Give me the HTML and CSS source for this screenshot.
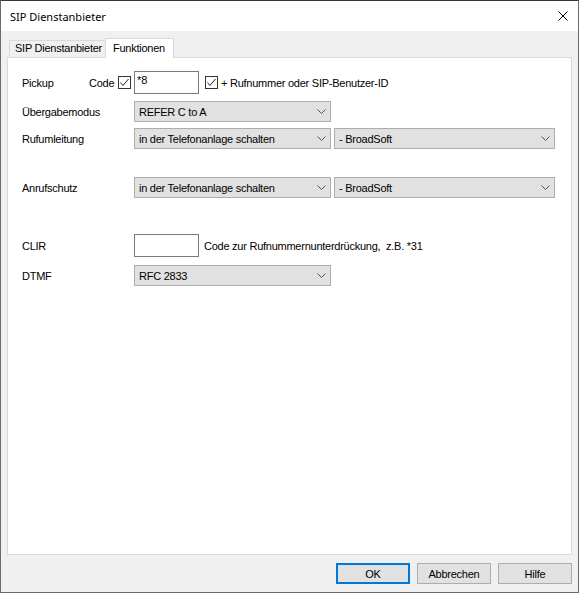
FILE: index.html
```html
<!DOCTYPE html>
<html lang="de">
<head>
	<meta charset="UTF-8">
	<title>SIP Dienstanbieter</title>
	<link rel="stylesheet" href="styles.css">
</head>
<body>

<div class="dialog">
	<div class="titlebar">
		<span class="title">SIP Dienstanbieter</span>
		<span class="close">
			<svg width="10" height="10" viewBox="0 0 10 10"><path d="M0.5 0.5L9.5 9.5M9.5 0.5L0.5 9.5" stroke="#000" stroke-width="1"/></svg>
		</span>
	</div>

	<div class="content">
		<div class="tabs">
			<div class="tab">SIP Dienstanbieter</div>
			<div class="tab active">Funktionen</div>
		</div>

		<div class="panel">
			<div class="row row-pickup">
				<span class="lbl lbl-pickup">Pickup</span>
				<span class="lbl-code">Code</span>
				<span class="check"><svg width="11" height="11" viewBox="0 0 11 11"><polyline points="1.5,5.5 4,8.5 9.5,2" fill="none" stroke="#222" stroke-width="1"/></svg></span>
				<input class="edit" type="text" value="*8">
				<span class="check check-gap"><svg width="11" height="11" viewBox="0 0 11 11"><polyline points="1.5,5.5 4,8.5 9.5,2" fill="none" stroke="#222" stroke-width="1"/></svg></span>
				<span class="after">+ Rufnummer oder SIP-Benutzer-ID</span>
			</div>

			<div class="row row-mode">
				<span class="lbl">Übergabemodus</span>
				<div class="combo">REFER C to A<svg class="arrow" width="9" height="5" viewBox="0 0 9 5"><polyline points="0.5,0.5 4.5,4.5 8.5,0.5" fill="none" stroke="#555" stroke-width="1"/></svg></div>
			</div>

			<div class="row row-forward">
				<span class="lbl">Rufumleitung</span>
				<div class="combo">in der Telefonanlage schalten<svg class="arrow" width="9" height="5" viewBox="0 0 9 5"><polyline points="0.5,0.5 4.5,4.5 8.5,0.5" fill="none" stroke="#555" stroke-width="1"/></svg></div>
				<div class="combo combo-wide">- BroadSoft<svg class="arrow" width="9" height="5" viewBox="0 0 9 5"><polyline points="0.5,0.5 4.5,4.5 8.5,0.5" fill="none" stroke="#555" stroke-width="1"/></svg></div>
			</div>

			<div class="row row-dnd">
				<span class="lbl">Anrufschutz</span>
				<div class="combo">in der Telefonanlage schalten<svg class="arrow" width="9" height="5" viewBox="0 0 9 5"><polyline points="0.5,0.5 4.5,4.5 8.5,0.5" fill="none" stroke="#555" stroke-width="1"/></svg></div>
				<div class="combo combo-wide">- BroadSoft<svg class="arrow" width="9" height="5" viewBox="0 0 9 5"><polyline points="0.5,0.5 4.5,4.5 8.5,0.5" fill="none" stroke="#555" stroke-width="1"/></svg></div>
			</div>

			<div class="row row-clir">
				<span class="lbl">CLIR</span>
				<input class="edit" type="text" value="">
				<span class="hint">Code zur Rufnummernunterdrückung,&nbsp; z.B. *31</span>
			</div>

			<div class="row row-dtmf">
				<span class="lbl">DTMF</span>
				<div class="combo">RFC 2833<svg class="arrow" width="9" height="5" viewBox="0 0 9 5"><polyline points="0.5,0.5 4.5,4.5 8.5,0.5" fill="none" stroke="#555" stroke-width="1"/></svg></div>
			</div>
		</div>

		<div class="buttons">
			<button class="btn btn-default">OK</button>
			<button class="btn">Abbrechen</button>
			<button class="btn">Hilfe</button>
		</div>
	</div>
</div>

</body>
</html>
```

FILE: styles.css
```css
*{
	margin: 0;
	padding: 0;
	box-sizing: border-box;
}
body{
	width: 579px;
	height: 593px;
	background: #f0f0f0;
	font-family: "Liberation Sans", Arial, sans-serif;
	font-size: 11px;
	letter-spacing: -0.25px;
	color: #000;
}

/* window frame */
.dialog{
	width: 579px;
	height: 593px;
	border: 1px solid #6a6a6a;
	border-top-color: #3c3632;
	background: #f0f0f0;
	display: flex;
	flex-direction: column;
}
.titlebar{
	height: 30px;
	background: #fff;
	display: flex;
	align-items: center;
	justify-content: space-between;
	padding: 0 10px 0 9px;
}
.title{
	font-family: "Noto Sans", "Liberation Sans", sans-serif;
	font-size: 11px;
	letter-spacing: 0;
	color: #000;
}
.close{
	display: flex;
	margin-top: -1px;
}
.close svg{
	display: block;
}

.content{
	padding: 7px 6px 0 6px;
	flex: 1;
	display: flex;
	flex-direction: column;
}

/* tab strip */
.tabs{
	height: 19px;
	display: flex;
	align-items: flex-end;
	padding-left: 2px;
}
.tab{
	height: 17px;
	padding: 0 4px 0 5px;
	border: 1px solid #d9d9d9;
	border-bottom: none;
	background: #f0f0f0;
	line-height: 15px;
}
.tab.active{
	height: 20px;
	margin-bottom: -1px;
	margin-left: -2px;
	padding: 0 8px 0 7px;
	background: #fff;
	line-height: 18px;
	position: relative;
	z-index: 1;
}

.panel{
	height: 498px;
	border: 1px solid #d9d9d9;
	background: #fff;
	padding: 13px 0 0 14px;
}

.row{
	display: flex;
	align-items: center;
}
.lbl{
	width: 112px;
	flex: none;
}
.lbl-pickup{
	width: 67px;
}
.lbl-code{
	width: 29px;
}
.row-pickup{
	height: 23px;
}
.row-mode{
	margin-top: 7px;
}
.row-forward{
	margin-top: 6px;
}
.row-dnd{
	margin-top: 28px;
}
.row-clir{
	margin-top: 36px;
	height: 23px;
}
.row-dtmf{
	margin-top: 8px;
}

/* checkbox */
.check{
	width: 13px;
	height: 13px;
	border: 1px solid #333;
	background: #fff;
	margin-right: 3px;
	display: flex;
}
.check svg{
	display: block;
}
.check-gap{
	margin-left: 6px;
}

.edit{
	width: 65px;
	height: 23px;
	border: 1px solid #7a7a7a;
	padding: 0 0 6px 2px;
	font-family: "Liberation Sans", Arial, sans-serif;
	font-size: 11px;
	outline: none;
}
.row-pickup .edit{
	padding-top: 0;
	line-height: 12px;
}
.hint{
	margin-left: 5px;
}

/* dropdown */
.combo{
	width: 197px;
	height: 21px;
	background: #e1e1e1;
	border: 1px solid #adadad;
	display: flex;
	align-items: center;
	justify-content: space-between;
	padding: 0 4px 0 4px;
}
.combo-wide{
	width: 221px;
	margin-left: 3px;
}
.arrow{
	display: block;
}

/* bottom buttons */
.buttons{
	display: flex;
	justify-content: flex-end;
	gap: 7px;
	margin-top: 8px;
}
.btn{
	width: 74px;
	height: 21px;
	background: #e1e1e1;
	border: 1px solid #adadad;
	font-family: "Liberation Sans", Arial, sans-serif;
	font-size: 11px;
	letter-spacing: -0.25px;
	color: #000;
}
.btn-default{
	border: 2px solid #0078d7;
}
```
